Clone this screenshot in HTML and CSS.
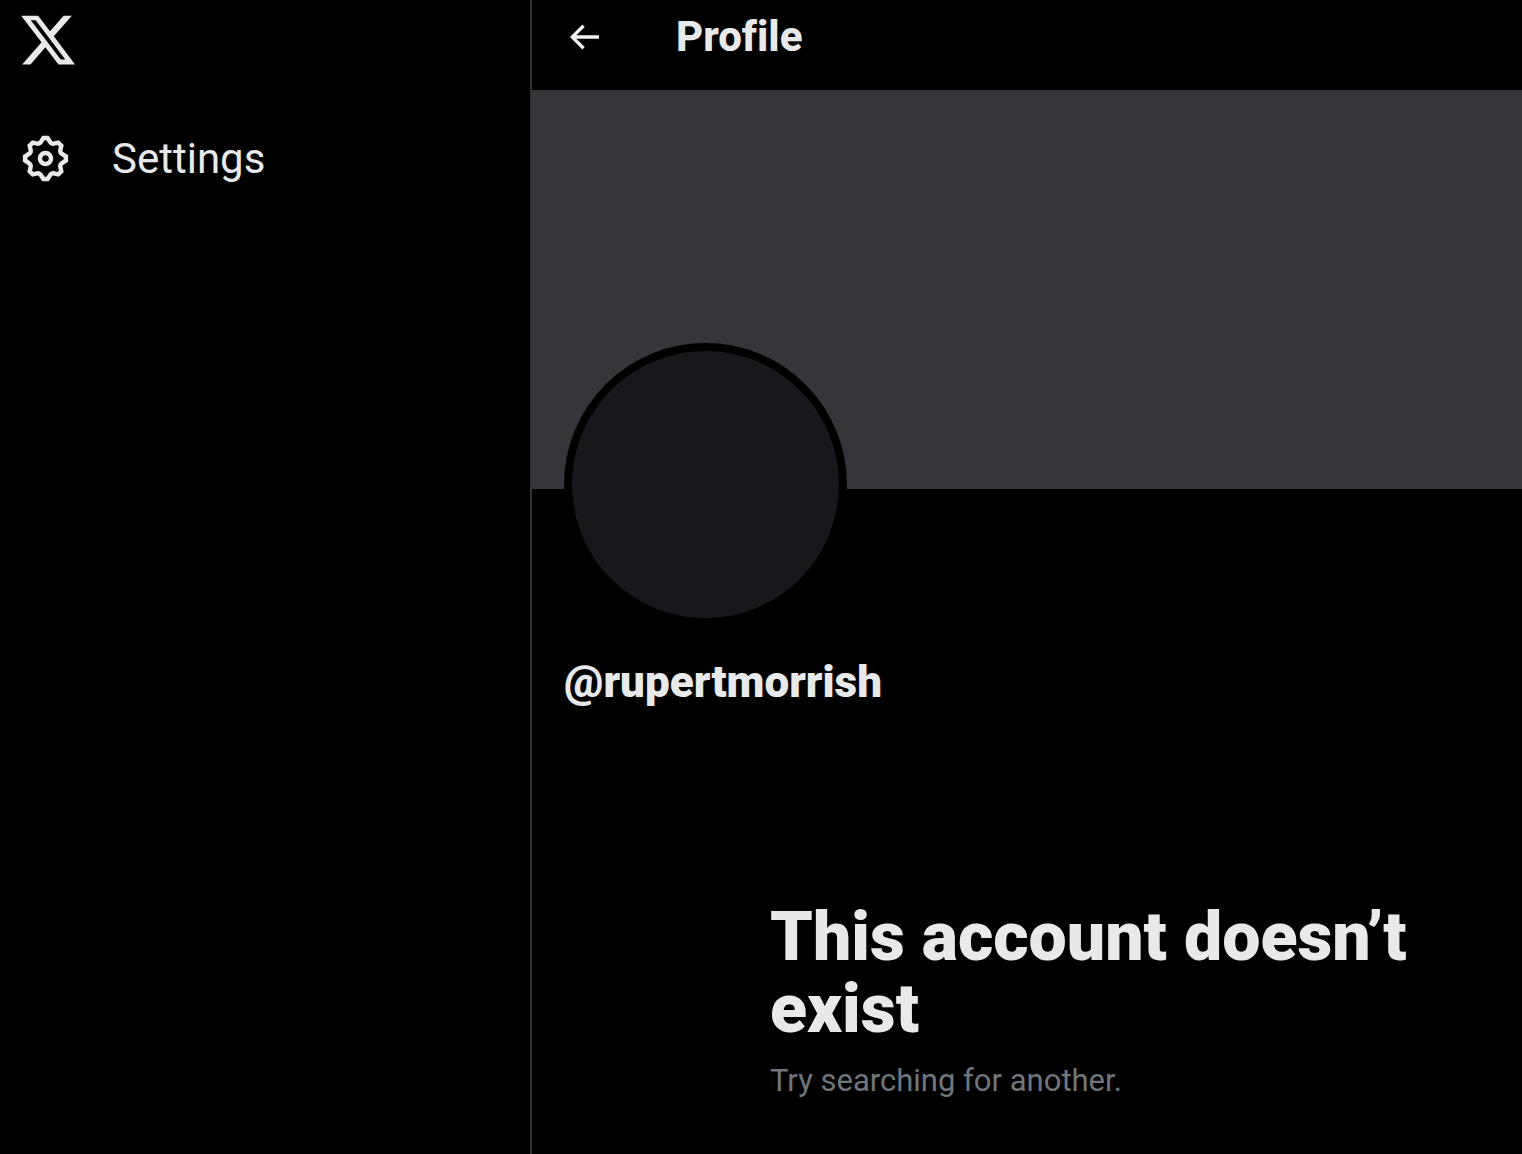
FILE: index.html
```
<!DOCTYPE html>
<html lang="en">
<head>
    <meta charset="UTF-8">
    <meta name="viewport" content="width=device-width, initial-scale=1.0">
    <title>Profile / X</title>
    <link rel="stylesheet" href="styles.css">
</head>
<body>

    <header class="sidebar">
        <a href="#" class="logo" aria-label="X">
            <svg viewBox="0 0 24 24" aria-hidden="true"><path d="M18.244 2.25h3.308l-7.227 8.26 8.502 11.24H16.17l-5.214-6.817L4.99 21.75H1.68l7.73-8.835L1.254 2.25H8.08l4.713 6.231zm-1.161 17.52h1.833L7.084 4.126H5.117z"/></svg>
        </a>
        <nav>
            <a href="#" class="nav-link">
                <svg viewBox="0 0 24 24" aria-hidden="true"><path d="M10.54 1.75h2.92l1.57 2.36c.11.17.32.25.53.21l2.53-.59 2.17 2.17-.58 2.54c-.05.2.04.41.21.53l2.36 1.57v2.92l-2.36 1.57c-.17.12-.26.33-.21.53l.58 2.54-2.17 2.17-2.53-.59c-.21-.04-.42.04-.53.21l-1.57 2.36h-2.92l-1.58-2.36c-.11-.17-.32-.25-.52-.21l-2.54.59-2.17-2.17.58-2.54c.05-.2-.03-.41-.21-.53l-2.35-1.57v-2.92L4.1 8.97c.18-.12.26-.33.21-.53L3.73 5.9 5.9 3.73l2.54.59c.2.04.41-.04.52-.21l1.58-2.36zm1.07 2l-.98 1.47C10.05 6.08 9 6.5 7.99 6.27l-1.46-.34-.6.6.33 1.46c.24 1.01-.18 2.07-1.05 2.64l-1.46.98v.78l1.46.98c.87.57 1.29 1.63 1.05 2.64l-.33 1.46.6.6 1.46-.34c1.01-.23 2.06.19 2.64 1.05l.98 1.47h.78l.97-1.47c.58-.86 1.63-1.28 2.65-1.05l1.45.34.61-.6-.34-1.46c-.23-1.01.18-2.07 1.05-2.64l1.47-.98v-.78l-1.47-.98c-.87-.57-1.28-1.63-1.05-2.64l.34-1.46-.61-.6-1.45.34c-1.02.23-2.07-.19-2.65-1.05l-.97-1.47h-.78zM12 10.5c-.83 0-1.5.67-1.5 1.5s.67 1.5 1.5 1.5c.83 0 1.5-.67 1.5-1.5s-.67-1.5-1.5-1.5zM8.5 12c0-1.93 1.56-3.5 3.5-3.5 1.93 0 3.5 1.57 3.5 3.5s-1.57 3.5-3.5 3.5c-1.94 0-3.5-1.57-3.5-3.5z"/></svg>
                <span>Settings</span>
            </a>
        </nav>
    </header>

    <main class="profile">
        <div class="topbar">
            <button type="button" class="back" aria-label="Back">
                <svg viewBox="0 0 24 24" aria-hidden="true"><path d="M7.414 13l5.043 5.04-1.414 1.42L3.586 12l7.457-7.46 1.414 1.42L7.414 11H21v2H7.414z"/></svg>
            </button>
            <h1>Profile</h1>
        </div>

        <div class="cover"></div>

        <div class="user">
            <div class="avatar"></div>
            <p class="handle">@rupertmorrish</p>
        </div>

        <div class="empty">
            <h2>This account doesn’t exist</h2>
            <p>Try searching for another.</p>
        </div>
    </main>

</body>
</html>
```
FILE: styles.css
```
* {
    box-sizing: border-box;
}

body {
    display: flex;
    min-height: 100vh;
    margin: 0;
    background-color: #000;
    color: #e7e9ea;
    font-family: Roboto, "Liberation Sans", sans-serif;
    font-size: 42px;
    line-height: 48px;
}

h1, h2, p {
    margin: 0;
}

svg {
    display: block;
    fill: currentColor;
}

.sidebar {
    flex: none;
    width: 532px;
    padding: 10px 18px;
    border-right: 2px solid #2f3336;
}

.logo {
    display: block;
    width: 60px;
    color: inherit;
}

.nav-link {
    display: inline-flex;
    align-items: center;
    gap: 40px;
    margin-top: 62px;
    padding-left: 1px;
    color: inherit;
    text-decoration: none;
}

.nav-link svg {
    width: 53px;
}

.profile {
    flex: 1;
    min-width: 0;
}

.topbar {
    display: flex;
    align-items: center;
    gap: 72px;
    height: 90px;
    padding: 0 32px 16px;
}

.topbar h1 {
    font-size: 42px;
    font-weight: 800;
    font-variant-ligatures: none;
}

.back {
    padding: 0;
    border: none;
    background: none;
    color: #eff3f4;
    cursor: pointer;
}

.back svg {
    width: 40px;
}

.cover {
    height: 399px;
    background-color: #35363a;
}

.user {
    padding: 0 32px;
}

/* the avatar overlaps the lower edge of the cover */
.avatar {
    width: 283px;
    height: 283px;
    margin-top: -146px;
    border: 8px solid #000;
    border-radius: 50%;
    background-color: #16181c;
}

.handle {
    margin-top: 32px;
    font-size: 44px;
    font-weight: 900;
}

.empty {
    max-width: 680px;
    margin-top: 195px;
    margin-left: 238px;
}

.empty h2 {
    font-size: 68px;
    font-weight: 900;
    line-height: 72px;
}

.empty p {
    margin-top: 16px;
    color: #71767b;
    font-size: 31px;
    line-height: 40px;
}
```
